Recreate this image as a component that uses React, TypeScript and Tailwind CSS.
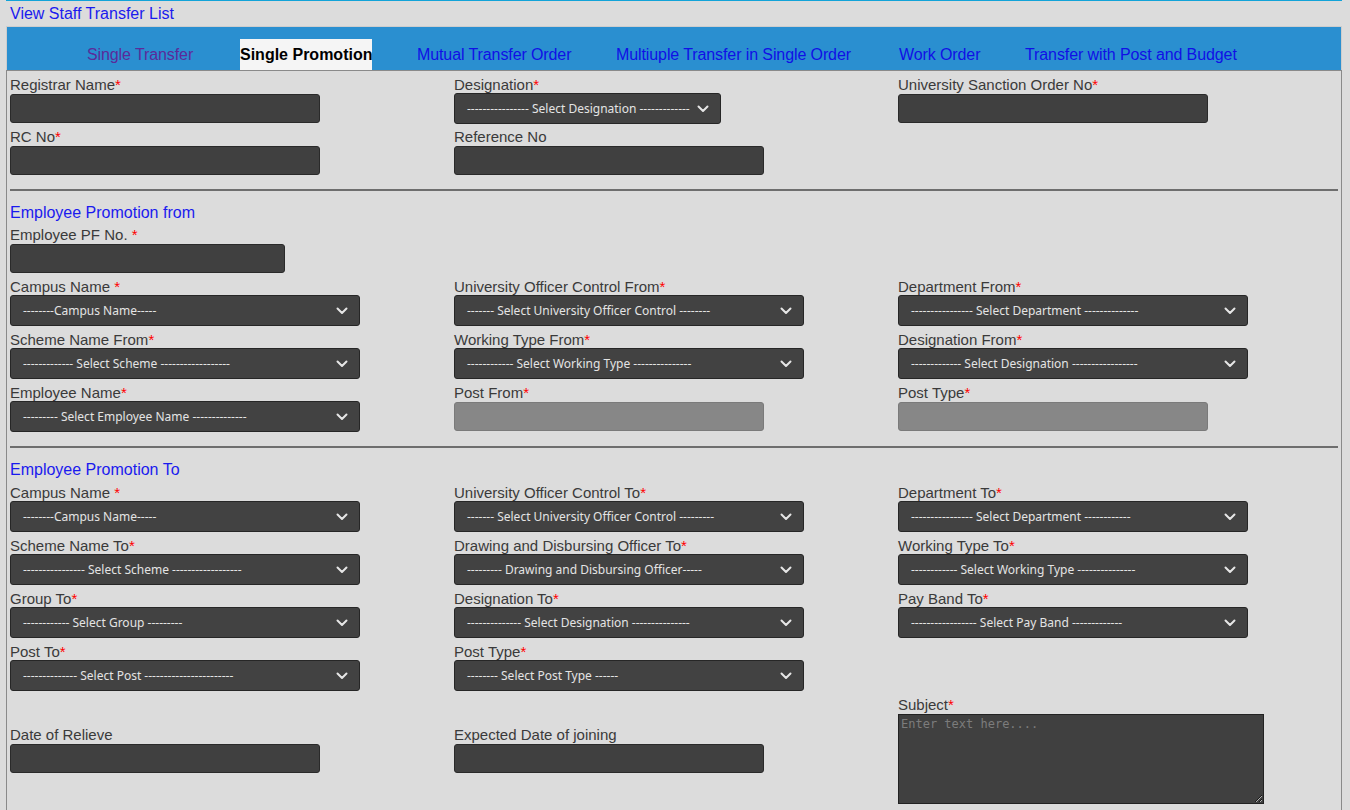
import React from "react";

type Field =
  | { kind: "input"; label: string; star?: string; w: string; disabled?: boolean }
  | { kind: "select"; label: string; star?: string; w: string; text: string }
  | { kind: "empty" };

const tabs = [
  { name: "Single Transfer", state: "visited", w: "w-[108px]" },
  { name: "Single Promotion", state: "active", w: "w-[132px]" },
  { name: "Mutual Transfer Order", state: "link", w: "w-[154px]" },
  { name: "Multiuple Transfer in Single Order", state: "link", w: "w-[238px]" },
  { name: "Work Order", state: "link", w: "w-[81px]" },
  { name: "Transfer with Post and Budget", state: "link", w: "w-[213px]" },
];

function Label({ label, star }: { label: string; star?: string }) {
  return (
    <div className="h-[18px] text-[15px] leading-[20px] text-[#3a3a3a] whitespace-nowrap">
      {label}
      {star !== undefined && <span className="text-[#ff0000]">{star}*</span>}
    </div>
  );
}

function Chevron() {
  return (
    <svg width="12" height="8" viewBox="0 0 12 8" fill="none">
      <path d="M1.5 1.5 L6 6 L10.5 1.5" stroke="#e6e6e6" strokeWidth="2" strokeLinecap="round" strokeLinejoin="round" />
    </svg>
  );
}

function FieldBox({ f }: { f: Field }) {
  if (f.kind === "empty") return <div />;
  if (f.kind === "input") {
    return (
      <div>
        <Label label={f.label} star={f.star} />
        <div
          className={
            f.disabled
              ? `${f.w} h-[29px] my-[1px] rounded-[3px] border border-[#7a7a7a] bg-[#878787]`
              : `${f.w} h-[29px] my-[1px] rounded-[3px] border border-[#2a2a2a] bg-[#404040]`
          }
        />
      </div>
    );
  }
  return (
    <div>
      <Label label={f.label} star={f.star} />
      <div
        className={`${f.w} h-[31px] rounded-[3px] border border-[#262626] bg-[#424242] flex items-center justify-between pl-[12px] pr-[11px] font-['Noto_Sans','Open_Sans',sans-serif] text-[12px] text-[#e4e4e4] whitespace-nowrap overflow-hidden`}
      >
        <span>{f.text}</span>
        <Chevron />
      </div>
    </div>
  );
}

const section1: Field[] = [
  { kind: "input", label: "Registrar Name", star: "", w: "w-[310px]" },
  { kind: "select", label: "Designation", star: "", w: "w-[267px]", text: "---------------- Select Designation -------------" },
  { kind: "input", label: "University Sanction Order No", star: "", w: "w-[310px]" },
  { kind: "input", label: "RC No", star: "", w: "w-[310px]" },
  { kind: "input", label: "Reference No", w: "w-[310px]" },
  { kind: "empty" },
];

const section2: Field[] = [
  { kind: "select", label: "Campus Name", star: " ", w: "w-[350px]", text: "--------Campus Name-----" },
  { kind: "select", label: "University Officer Control From", star: "", w: "w-[350px]", text: "------- Select University Officer Control --------" },
  { kind: "select", label: "Department From", star: "", w: "w-[350px]", text: "---------------- Select Department --------------" },
  { kind: "select", label: "Scheme Name From", star: "", w: "w-[350px]", text: "------------- Select Scheme ------------------" },
  { kind: "select", label: "Working Type From", star: "", w: "w-[350px]", text: "------------ Select Working Type ---------------" },
  { kind: "select", label: "Designation From", star: "", w: "w-[350px]", text: "------------- Select Designation -----------------" },
  { kind: "select", label: "Employee Name", star: "", w: "w-[350px]", text: "--------- Select Employee Name --------------" },
  { kind: "input", label: "Post From", star: "", w: "w-[310px]", disabled: true },
  { kind: "input", label: "Post Type", star: "", w: "w-[310px]", disabled: true },
];

const section3: Field[] = [
  { kind: "select", label: "Campus Name", star: " ", w: "w-[350px]", text: "--------Campus Name-----" },
  { kind: "select", label: "University Officer Control To", star: "", w: "w-[350px]", text: "------- Select University Officer Control ---------" },
  { kind: "select", label: "Department To", star: "", w: "w-[350px]", text: "---------------- Select Department ------------" },
  { kind: "select", label: "Scheme Name To", star: "", w: "w-[350px]", text: "---------------- Select Scheme ------------------" },
  { kind: "select", label: "Drawing and Disbursing Officer To", star: "", w: "w-[350px]", text: "--------- Drawing and Disbursing Officer-----" },
  { kind: "select", label: "Working Type To", star: "", w: "w-[350px]", text: "------------ Select Working Type ---------------" },
  { kind: "select", label: "Group To", star: "", w: "w-[350px]", text: "------------ Select Group ---------" },
  { kind: "select", label: "Designation To", star: "", w: "w-[350px]", text: "-------------- Select Designation ---------------" },
  { kind: "select", label: "Pay Band To", star: "", w: "w-[350px]", text: "----------------- Select Pay Band -------------" },
  { kind: "select", label: "Post To", star: "", w: "w-[350px]", text: "-------------- Select Post -----------------------" },
  { kind: "select", label: "Post Type", star: "", w: "w-[350px]", text: "-------- Select Post Type ------" },
  { kind: "empty" },
];

export default function App() {
  return (
    <div className="min-h-screen bg-[#dcdcdc] font-['Liberation_Sans',Arial,sans-serif]">
      <div className="ml-[6px] mr-[8px]">
        <div className="border-t border-[#12a3d8]">
          <a href="#" className="block h-[25px] pl-[4px] text-[16px] leading-[25px] text-[#1a1aee]">
            View Staff Transfer List
          </a>
        </div>

        {/* tabs */}
        <div className="border-t border-x border-[#cdcdcd] bg-[#2a8fd0] h-[44px] flex items-end pl-[80px] gap-[45px]">
          {tabs.map((t) => (
            <a
              key={t.name}
              href="#"
              className={
                t.state === "active"
                  ? `${t.w} h-[31px] leading-[31px] text-[16px] font-bold text-black bg-[#f5f5f5] whitespace-nowrap text-center`
                  : t.state === "visited"
                  ? `${t.w} h-[31px] leading-[31px] text-[16px] text-[#5b2a9a] whitespace-nowrap tracking-[-0.1px]`
                  : `${t.w} h-[31px] leading-[31px] text-[16px] text-[#1010e6] whitespace-nowrap tracking-[-0.1px]`
              }
            >
              {t.name}
            </a>
          ))}
        </div>

        {/* form panel */}
        <div className="border-t border-x border-[#8a8a8a] pt-[4px] px-[3px] pb-[20px]">
          <div className="grid grid-cols-[444px_444px_1fr] gap-y-[3px]">
            {section1.map((f, i) => (
              <FieldBox key={i} f={f} />
            ))}
          </div>

          <div className="mt-[13px] h-[2px] bg-[#6e6e6e]" />

          <div className="mt-[12px] text-[16px] leading-[20px] text-[#1a1aee]">Employee Promotion from</div>
          <div className="mt-[2px] mb-[4px]">
            <FieldBox f={{ kind: "input", label: "Employee PF No.", star: " ", w: "w-[275px]" }} />
          </div>
          <div className="grid grid-cols-[444px_444px_1fr] gap-y-[4px]">
            {section2.map((f, i) => (
              <FieldBox key={i} f={f} />
            ))}
          </div>

          <div className="mt-[14px] h-[2px] bg-[#6e6e6e]" />

          <div className="mt-[12px] text-[16px] leading-[20px] text-[#1a1aee]">Employee Promotion To</div>
          <div className="mt-[3px] grid grid-cols-[444px_444px_1fr] gap-y-[4px]">
            {section3.map((f, i) => (
              <FieldBox key={i} f={f} />
            ))}
            <div className="pt-[30px]">
              <FieldBox f={{ kind: "input", label: "Date of Relieve", w: "w-[310px]" }} />
            </div>
            <div className="pt-[30px]">
              <FieldBox f={{ kind: "input", label: "Expected Date of joining", w: "w-[310px]" }} />
            </div>
            <div>
              <Label label="Subject" star="" />
              <textarea
                placeholder="Enter text here...."
                className="block mt-[1px] w-[366px] h-[90px] p-[2px] border border-[#222] bg-[#404040] text-[12px] leading-[14px] text-[#ddd] placeholder:text-[#7c7c7c] font-['DejaVu_Sans_Mono',monospace] outline-none"
              />
            </div>
          </div>
        </div>
      </div>
    </div>
  );
}
